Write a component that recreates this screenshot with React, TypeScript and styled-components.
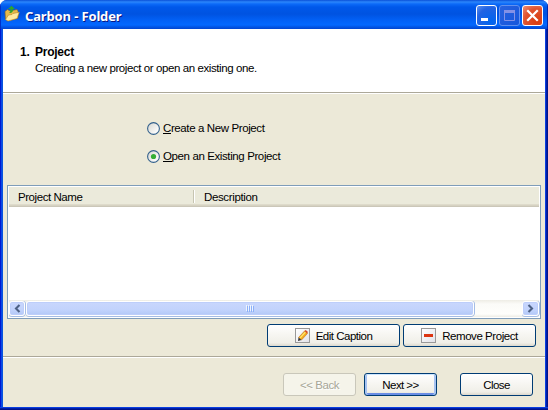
import React from "react";
import styled, { createGlobalStyle, css } from "styled-components";

const Global = createGlobalStyle`
  * { box-sizing: border-box; }
  body { margin: 0; background: #fff; overflow: hidden; }
  button { margin: 0; padding: 0; font: inherit; }
`;

const Window = styled.div`
  width: 548px;
  height: 410px;
  display: flex;
  flex-direction: column;
  overflow: hidden;
  border-radius: 7px 7px 0 0;
  background:
    linear-gradient(180deg, transparent 407px, #0a3fe0 407px 408px, #001fa8 408px 409px, #00138c 409px),
    linear-gradient(90deg, #0019cf 0 1px, #0a48e8 1px 2px, #0855dd 2px 3px, #0831d9 3px 545px, #0a3fe0 545px 546px, #001fa8 546px 547px, #00138c 547px);
  font: 11.5px/14px "Liberation Sans", Arial, sans-serif;
  color: #000;
`;

const TitleBar = styled.header`
  height: 29px;
  flex: none;
  display: flex;
  align-items: center;
  padding: 2px 5px 0 4px;
  background: linear-gradient(180deg, #0a50d8 0, #2b86fb 2px, #0c6af8 4px, #0058ea 7px, #0053e1 14px, #0260f5 20px, #0368ff 25px, #0255e4 27px, #0144d0 29px);
  box-shadow: inset 1px 0 #0030c8, inset -1px 0 #0028b0;
`;

const Title = styled.h1`
  flex: 1;
  margin: 0 0 0 5px;
  font: bold 13px/18px "Noto Sans", sans-serif;
  letter-spacing: -0.14px;
  color: #fff;
  text-shadow: 1px 1px #0a1883;
`;

const CaptionButtons = styled.div`
  display: flex;
  gap: 2px;
`;

const CaptionButton = styled.button<{ $kind: "normal" | "dim" | "close" }>`
  width: 21px;
  height: 21px;
  border: 1px solid ${p => (p.$kind === "dim" ? "#6290ee" : "#fff")};
  border-radius: 3px;
  display: flex;
  background: ${p =>
    p.$kind === "close"
      ? "radial-gradient(circle at 75% 80%, #d93c10, #e0532f 60%, #ee9078)"
      : p.$kind === "dim"
      ? "linear-gradient(135deg, #2862df, #1656dc)"
      : "radial-gradient(circle at 75% 80%, #0065f0, #2263e2 65%, #6092ef)"};
`;

const Body = styled.main`
  flex: none;
  width: 542px;
  height: 378px;
  margin-left: 3px;
  display: flex;
  flex-direction: column;
  background: #ece9d8;
`;

const Banner = styled.section`
  height: 63px;
  padding: 16px 0 0 17px;
  background: #fff;
`;

const BannerTitle = styled.h2`
  display: flex;
  margin: 0;
  font-size: 12px;
  line-height: 14px;
  letter-spacing: -0.25px;
`;

const StepNumber = styled.span`
  width: 15px;
`;

const BannerText = styled.p`
  margin: 2px 0 0 15px;
  letter-spacing: -0.41px;
`;

const Divider = styled.div`
  height: 2px;
  flex: none;
  border-top: 1px solid #aca899;
  border-bottom: 1px solid #fff;
`;

const Options = styled.div`
  height: 91px;
  display: flex;
  flex-direction: column;
  gap: 14px;
  padding: 27px 0 0 144px;
`;

const Option = styled.label`
  height: 14px;
  display: flex;
  align-items: center;
  gap: 3px;
  letter-spacing: -0.39px;
`;

const Mnemonic = styled.span`
  border-bottom: 1px solid #000;
  display: inline-block;
  height: 13px;
`;

const List = styled.div`
  width: 534px;
  height: 134px;
  flex: none;
  margin-left: 4px;
  padding: 1px;
  display: flex;
  flex-direction: column;
  justify-content: space-between;
  background: #fff;
  border: 1px solid #7f9db9;
`;

const ListHeader = styled.div`
  height: 20px;
  display: flex;
  background: linear-gradient(180deg, #ebeadb 17px, #dedbcb 17px 18px, #d6d2c2 18px 19px, #cbc7b8 19px);
`;

const Column = styled.div<{ $width?: number; $spacing: number }>`
  ${p => (p.$width ? css`width: ${p.$width}px;` : css`flex: 1;`)}
  padding: 3px 0 0 9px;
  letter-spacing: ${p => p.$spacing}px;
`;

const ColumnGrip = styled.div`
  width: 2px;
  height: 13px;
  margin-top: 3px;
  border-left: 1px solid #c7c5b2;
  border-right: 1px solid #fff;
`;

const ScrollBar = styled.div`
  height: 17px;
  display: flex;
  background: linear-gradient(#eeede5, #fbfbf8 4px, #fefefb 14px, #eeede5);
`;

const ScrollPart = styled.div<{ $width: number }>`
  width: ${p => p.$width}px;
  height: 15px;
  flex: none;
  margin-top: 1px;
  display: flex;
  align-items: center;
  justify-content: center;
  border: 1px solid #fff;
  border-radius: 3px;
  background: linear-gradient(180deg, #c9d7fd, #c2d3fc 60%, #b1c8f7);
  box-shadow: inset 0 0 0 1px #bdcefa, 0 1px #a5bde5, 1px 0 #a5bde5;
`;

const Track = styled.div`
  flex: 1;
  display: flex;
  padding-left: 1px;
`;

const ListActions = styled.div`
  height: 37px;
  flex: none;
  display: flex;
  justify-content: flex-end;
  gap: 3px;
  padding: 5px 9px 0 0;
`;

const Footer = styled.footer`
  display: flex;
  justify-content: flex-end;
  gap: 8px;
  padding: 15px 12px 0 0;
`;

const PushButton = styled.button<{ $width: number; $spacing: number; $state?: "default" | "disabled" }>`
  width: ${p => p.$width}px;
  height: 23px;
  display: flex;
  align-items: center;
  justify-content: center;
  gap: 6px;
  border: 1px solid #003c74;
  border-radius: 3px;
  background: linear-gradient(180deg, #fff, #f7f6f2 45%, #f0efe8 85%, #dcd8cd);
  color: #000;
  letter-spacing: ${p => p.$spacing}px;
  ${p => p.$state === "default" && css`
    box-shadow: inset 0 1px #cee7ff, inset 2px 0 #a7c3f1, inset -2px 0 #a7c3f1, inset 0 -2px #6a8de4;
  `}
  ${p => p.$state === "disabled" && css`
    color: #a7a697;
    text-shadow: 1px 1px #fff;
    background: #f5f4ea;
    border-color: #c9c7ba;
  `}
`;

const CloseButton = styled(PushButton)`
  margin-left: 15px;
`;

const IconFrame = styled.span`
  width: 15px;
  height: 15px;
  flex: none;
  display: flex;
  border: 1px solid #999;
  background: linear-gradient(135deg, #fff, #e2e2e8);
`;

const FolderSvg = styled.svg`
  margin-bottom: 4px;
`;

function FolderIcon() {
  return (
    <FolderSvg width="16" height="17" viewBox="0 0 16 17">
      <path d="M1 6.5 3.5 4.5 6 6 13 4.5 14 6v7L4 16 1.5 14Z" fill="#e8b94b" stroke="#8c681e" strokeWidth=".6" />
      <path d="M1.5 14.5 4.5 10 8 9.5l1-1 6.3-1.3-2.3 6.3L4 16Z" fill="#ffe9a0" stroke="#b88a2b" strokeWidth=".6" />
      <path d="M5 8C9 8 9.2 6 8.7 4H11L7.5 .7 4 4H6.3C6.5 6 6.5 7 5 8Z" fill="#2fa52b" />
    </FolderSvg>
  );
}

function RadioIcon({ checked }: { checked?: boolean }) {
  return (
    <svg width="13" height="13" viewBox="0 0 13 13">
      <defs>
        <linearGradient id="well" x1="0" y1="0" x2="1" y2="1">
          <stop offset="0.15" stopColor="#dcdcd7" />
          <stop offset="0.85" stopColor="#fff" />
        </linearGradient>
      </defs>
      <circle cx="6.5" cy="6.5" r="5.9" fill="url(#well)" stroke="#34618c" strokeWidth="1.1" />
      {checked && <circle cx="6.5" cy="6.5" r="2.6" fill="#35ae35" />}
    </svg>
  );
}

function ArrowIcon({ right }: { right?: boolean }) {
  return (
    <svg width="7" height="9" viewBox="0 0 7 9">
      <path d={right ? "M1.5 1 5 4.5 1.5 8" : "M5.5 1 2 4.5 5.5 8"} fill="none" stroke="#4d6185" strokeWidth="2.1" />
    </svg>
  );
}

function GripIcon() {
  return (
    <svg width="8" height="7" shapeRendering="crispEdges">
      <path d="M.5 0v6M2.5 0v6M4.5 0v6M6.5 0v6" stroke="#eef4fe" />
      <path d="M1.5 1v6M3.5 1v6M5.5 1v6M7.5 1v6" stroke="#8cb0f8" />
    </svg>
  );
}

function PencilIcon() {
  return (
    <svg width="13" height="13" viewBox="0 0 13 13">
      <path d="m2.5 8.5 6-6.5 3 2.5-6 6.5Z" fill="#f5a91c" stroke="#a8651a" strokeWidth=".5" />
      <path d="m4 9 5.5-6" stroke="#ffe56b" strokeWidth="1.2" />
      <path d="m8.5 2 1.2-1 2.3 2-1 1.5Z" fill="#d94b22" />
      <path d="m2.5 8.5 3 2.5L2 12Z" fill="#333" />
    </svg>
  );
}

export default function App() {
  return (
    <>
      <Global />
      <Window>
        <TitleBar>
          <FolderIcon />
          <Title>Carbon - Folder</Title>
          <CaptionButtons>
            <CaptionButton $kind="normal" aria-label="Minimize">
              <svg width="19" height="19"><path d="M4 12h7v3H4Z" fill="#fff" /></svg>
            </CaptionButton>
            <CaptionButton $kind="dim" aria-label="Maximize">
              <svg width="19" height="19">
                <path d="M4.5 5.5h10v9h-10ZM4 5h11" fill="none" stroke="#8391e6" />
                <path d="M4 4h11v3H4Z" fill="#8391e6" />
              </svg>
            </CaptionButton>
            <CaptionButton $kind="close" aria-label="Close window">
              <svg width="19" height="19"><path d="m5 5 9 9M14 5l-9 9" stroke="#fff" strokeWidth="2.2" strokeLinecap="square" /></svg>
            </CaptionButton>
          </CaptionButtons>
        </TitleBar>
        <Body>
          <Banner>
            <BannerTitle><StepNumber>1.</StepNumber>Project</BannerTitle>
            <BannerText>Creating a new project or open an existing one.</BannerText>
          </Banner>
          <Divider />
          <Options>
            <Option>
              <RadioIcon />
              <span><Mnemonic>C</Mnemonic>reate a New Project</span>
            </Option>
            <Option>
              <RadioIcon checked />
              <span><Mnemonic>O</Mnemonic>pen an Existing Project</span>
            </Option>
          </Options>
          <List>
            <ListHeader>
              <Column $width={184} $spacing={-0.44}>Project Name</Column>
              <ColumnGrip />
              <Column $spacing={-0.36}>Description</Column>
            </ListHeader>
            <ScrollBar>
              <ScrollPart $width={16}><ArrowIcon /></ScrollPart>
              <Track>
                <ScrollPart $width={448}><GripIcon /></ScrollPart>
              </Track>
              <ScrollPart $width={17}><ArrowIcon right /></ScrollPart>
            </ScrollBar>
          </List>
          <ListActions>
            <PushButton $width={133} $spacing={-0.5}>
              <IconFrame><PencilIcon /></IconFrame>
              Edit Caption
            </PushButton>
            <PushButton $width={133} $spacing={-0.45}>
              <IconFrame>
                <svg width="13" height="13"><path d="M2 5h9v3H2Z" fill="#dc3512" /></svg>
              </IconFrame>
              Remove Project
            </PushButton>
          </ListActions>
          <Divider />
          <Footer>
            <PushButton $width={73} $spacing={-0.45} $state="disabled">&lt;&lt; Back</PushButton>
            <PushButton $width={73} $spacing={-0.55} $state="default">Next &gt;&gt;</PushButton>
            <CloseButton $width={73} $spacing={-0.6}>Close</CloseButton>
          </Footer>
        </Body>
      </Window>
    </>
  );
}
